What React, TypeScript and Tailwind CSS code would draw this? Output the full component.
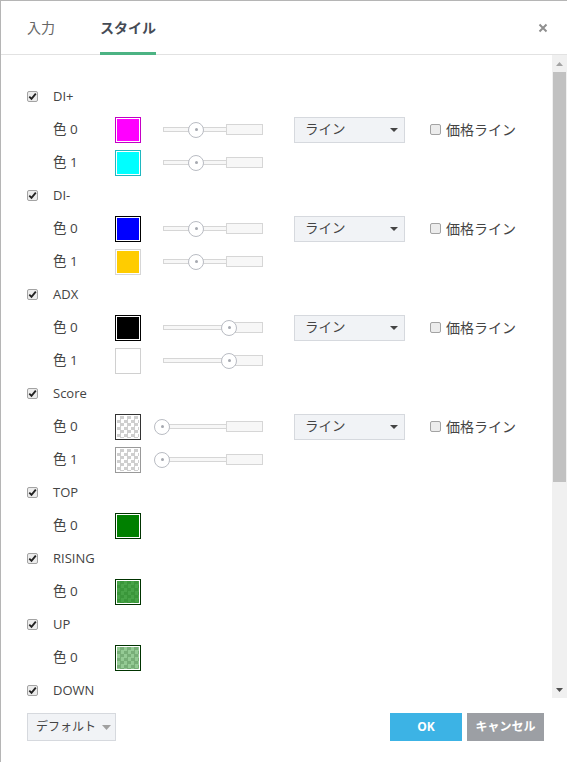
import React from "react";

const FONT = { fontFamily: '"Open Sans", "Noto Sans CJK JP", sans-serif' };

function Check({ checked }: { checked: boolean }) {
  return (
    <span className="w-[11px] h-[11px] shrink-0 rounded-[2px] border border-[#a3a3a3] bg-[#ececec] flex items-center justify-center">
      {checked && (
        <svg width="9" height="9" viewBox="0 0 9 9">
          <path d="M1.3 4.6 L3.5 6.9 L7.8 1.6" fill="none" stroke="#222" strokeWidth="1.8" />
        </svg>
      )}
    </span>
  );
}

function Slider({ pos }: { pos: number }) {
  return (
    <div className="relative w-[100px] h-[16px] flex items-center">
      <div className="w-[64px] h-[5px] border border-[#d6d6d6] bg-[#f7f7f7]" />
      <div className="w-[37px] h-[11px] border border-[#d6d6d6] bg-[#f7f7f7] -ml-px" />
      <div
        className="absolute top-0 w-[16px] h-[16px] rounded-full border border-[#b9bcc3] bg-white flex items-center justify-center"
        style={{ left: pos - 8 }}
      >
        <div className="w-[3px] h-[3px] rounded-full bg-[#a6a9b0]" />
      </div>
    </div>
  );
}

type Sw = { kind: "solid" | "checker" | "alpha"; color: string; border: string; alpha?: number };

function Swatch({ s }: { s: Sw }) {
  const checker =
    "bg-[conic-gradient(#cfcfcf_25%,#ffffff_0_50%,#cfcfcf_0_75%,#ffffff_0)] bg-[length:7px_7px]";
  return (
    <div className="w-[26px] h-[26px] p-px bg-white border" style={{ borderColor: s.border }}>
      {s.kind === "solid" && <div className="w-full h-full" style={{ background: s.color }} />}
      {s.kind === "checker" && <div className={"w-full h-full " + checker} />}
      {s.kind === "alpha" && (
        <div className={"w-full h-full " + checker}>
          <div className="w-full h-full" style={{ background: s.color, opacity: s.alpha }} />
        </div>
      )}
    </div>
  );
}

function Select() {
  return (
    <div className="w-[111px] h-[26px] border border-[#d6d9de] bg-[#f1f3f6] flex items-center justify-between pl-[10px] pr-[6px] text-[13.5px] text-[#444]">
      <span>ライン</span>
      <svg width="8" height="4" viewBox="0 0 8 4">
        <path d="M0 0 H8 L4 4 Z" fill="#444" />
      </svg>
    </div>
  );
}

type ColorRow = { n: number; sw: Sw; slider?: number; extra?: boolean };
type Group = { name: string; rows: ColorRow[] };

const groups: Group[] = [
  {
    name: "DI+",
    rows: [
      { n: 0, sw: { kind: "solid", color: "#ff00ff", border: "#c400c4" }, slider: 33, extra: true },
      { n: 1, sw: { kind: "solid", color: "#00ffff", border: "#1fb8c0" }, slider: 33 },
    ],
  },
  {
    name: "DI-",
    rows: [
      { n: 0, sw: { kind: "solid", color: "#0000ff", border: "#000000" }, slider: 33, extra: true },
      { n: 1, sw: { kind: "solid", color: "#ffcc00", border: "#d6d6d6" }, slider: 33 },
    ],
  },
  {
    name: "ADX",
    rows: [
      { n: 0, sw: { kind: "solid", color: "#000000", border: "#000000" }, slider: 66, extra: true },
      { n: 1, sw: { kind: "solid", color: "#ffffff", border: "#d0d0d0" }, slider: 66 },
    ],
  },
  {
    name: "Score",
    rows: [
      { n: 0, sw: { kind: "checker", color: "", border: "#333333" }, slider: -1, extra: true },
      { n: 1, sw: { kind: "checker", color: "", border: "#999999" }, slider: -1 },
    ],
  },
  { name: "TOP", rows: [{ n: 0, sw: { kind: "solid", color: "#008000", border: "#003300" } }] },
  { name: "RISING", rows: [{ n: 0, sw: { kind: "alpha", color: "#008000", border: "#003300", alpha: 0.72 } }] },
  { name: "UP", rows: [{ n: 0, sw: { kind: "alpha", color: "#008000", border: "#003300", alpha: 0.42 } }] },
  { name: "DOWN", rows: [] },
];

export default function App() {
  return (
    <div
      className="w-[567px] h-[762px] bg-white border-l border-t border-[#b5b5b5] flex flex-col overflow-hidden text-[#444]"
      style={FONT}
    >
      {/* header */}
      <div className="h-[54px] shrink-0 border-b border-[#e2e2e2] flex items-stretch pl-[26px] pr-[18px]">
        <div className="flex items-center text-[14px] text-[#666]">入力</div>
        <div className="ml-[45px] relative flex items-center text-[14px] font-bold text-[#454b55]">
          スタイル
          <div className="absolute left-0 right-0 bottom-[-1px] h-[3px] bg-[#4cb383]" />
        </div>
        <div className="ml-auto flex items-center text-[#8a8a8a] pr-[1px]">
          <svg width="10" height="10" viewBox="0 0 10 10">
            <path d="M1.5 1.5 L8.5 8.5 M8.5 1.5 L1.5 8.5" stroke="#8f8f8f" strokeWidth="2" />
          </svg>
        </div>
      </div>

      {/* body */}
      <div className="h-[643px] shrink-0 flex">
        <div className="flex-1 overflow-hidden pt-[25px] pl-[26px]">
          {groups.map((g) => (
            <div key={g.name}>
              <div className="h-[33px] flex items-center">
                <Check checked />
                <span className="ml-[15px] text-[13px]">{g.name}</span>
              </div>
              {g.rows.map((r) => (
                <div key={r.n} className="h-[33px] flex items-center">
                  <span className="ml-[26px] w-[62px] text-[13.5px]">色 {r.n}</span>
                  <Swatch s={r.sw} />
                  {r.slider !== undefined && (
                    <div className="ml-[22px]">
                      <Slider pos={r.slider} />
                    </div>
                  )}
                  {r.extra && (
                    <>
                      <div className="ml-[31px]">
                        <Select />
                      </div>
                      <div className="ml-[25px] flex items-center">
                        <Check checked={false} />
                        <span className="ml-[5px] text-[14px] whitespace-nowrap">価格ライン</span>
                      </div>
                    </>
                  )}
                </div>
              ))}
            </div>
          ))}
        </div>
        {/* scrollbar */}
        <div className="w-[15px] shrink-0 bg-[#f0f0f0] flex flex-col items-center">
          <div className="h-[17px] flex items-center justify-center">
            <svg width="7" height="4" viewBox="0 0 7 4">
              <path d="M0 4 H7 L3.5 0 Z" fill="#a3a3a3" />
            </svg>
          </div>
          <div className="w-[13px] h-[410px] bg-[#c1c1c1]" />
          <div className="flex-1" />
          <div className="h-[17px] flex items-center justify-center">
            <svg width="7" height="4" viewBox="0 0 7 4">
              <path d="M0 0 H7 L3.5 4 Z" fill="#505050" />
            </svg>
          </div>
        </div>
      </div>

      {/* footer */}
      <div className="flex-1 flex items-start pt-[15px] pl-[26px] pr-[23px]">
        <div className="h-[28px] w-[89px] border border-[#d6d9de] bg-[#f1f3f6] flex items-center pl-[8px] gap-[6px] text-[12px] text-[#444] whitespace-nowrap">
          <span>デフォルト</span>
          <svg width="9" height="5" viewBox="0 0 9 5" className="shrink-0">
            <path d="M0 0 H9 L4.5 5 Z" fill="#a0a0a0" />
          </svg>
        </div>
        <div className="ml-auto flex gap-[5px]">
          <div className="w-[72px] h-[28px] bg-[#3cb3e5] text-white text-[12px] font-bold flex items-center justify-center">
            OK
          </div>
          <div className="w-[77px] h-[28px] bg-[#9c9fa4] text-white text-[12px] font-bold flex items-center justify-center">
            キャンセル
          </div>
        </div>
      </div>
    </div>
  );
}
